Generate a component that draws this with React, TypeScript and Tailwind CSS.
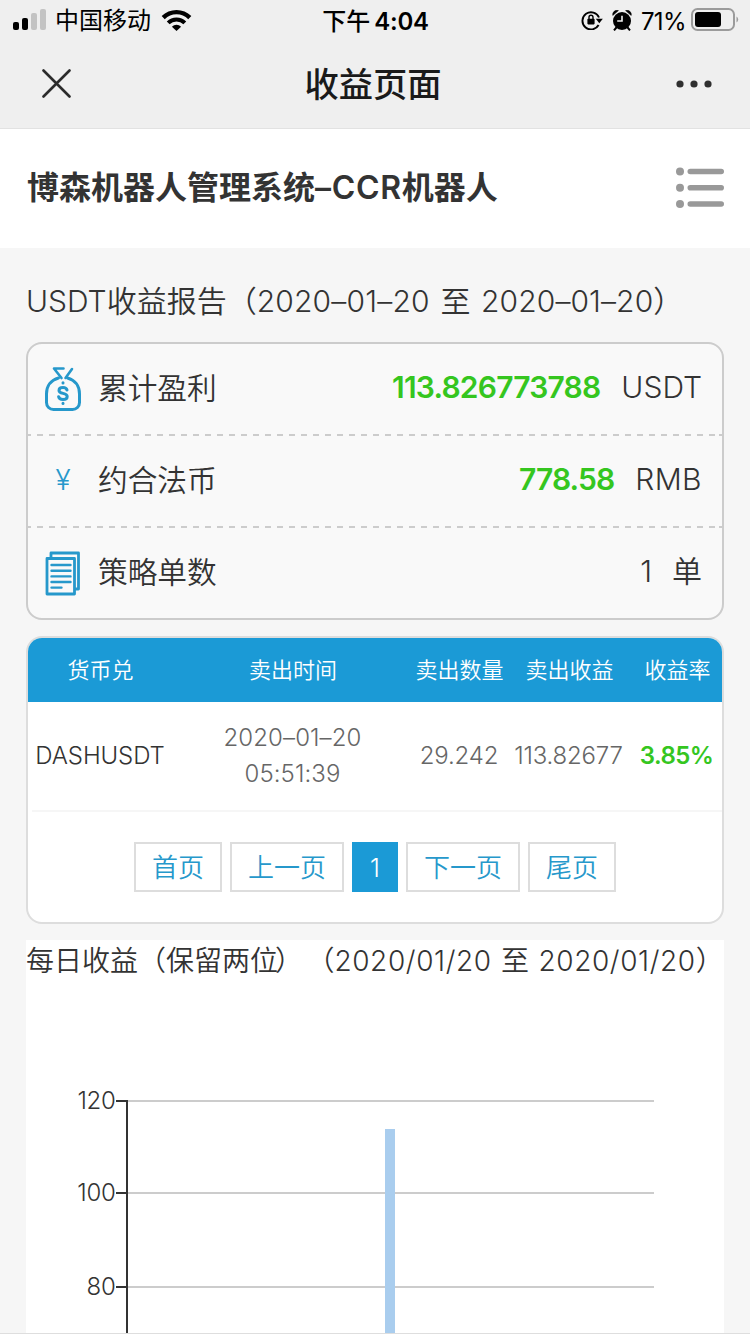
import React from 'react';
import clsx from 'clsx';

const GRID = [
  { value: 120, y: 121 },
  { value: 100, y: 213 },
  { value: 80, y: 307 },
];

const COLUMNS = [
  { label: '货币兑', className: 'w-[145px]' },
  { label: '卖出时间', className: 'w-[240px]' },
  { label: '卖出数量', className: 'w-[93px]' },
  { label: '卖出收益', className: 'w-[127px]' },
  { label: '收益率', className: 'w-[89px]' },
];

const PAGES = [
  { label: '首页', className: 'w-[88px]' },
  { label: '上一页', className: 'w-[114px]' },
  { label: '1', className: 'w-[46px]', active: true },
  { label: '下一页', className: 'w-[114px]' },
  { label: '尾页', className: 'w-[88px]' },
];

function StatusBar() {
  return (
    <div className="flex h-10 items-center text-black">
      <div className="flex flex-1 items-center pl-[13px]">
        <svg width="34" height="22" viewBox="0 0 34 22">
          <rect x="0" y="13" width="6" height="8" rx="2" />
          <rect x="9" y="9" width="6" height="12" rx="2" />
          <rect x="18" y="4" width="6" height="17" rx="2" fill="#c3c3c3" />
          <rect x="27" y="0" width="6" height="21" rx="2" fill="#c3c3c3" />
        </svg>
        <span className="ml-2 pt-[2px] text-[24px] leading-none">中国移动</span>
        <svg className="ml-[10px]" width="31" height="22" viewBox="0 0 31 22">
          <path d="M2.200 8.600a19 19 0 0 1 26.600 0" fill="none" stroke="#000" strokeWidth="4.400" />
          <path d="M7.200 13.800a11.800 11.800 0 0 1 16.600 0" fill="none" stroke="#000" strokeWidth="4" />
          <path d="M15.500 22l-4.600-4.300a6.600 6.600 0 0 1 9.200 0z" />
        </svg>
      </div>
      <div className="flex items-baseline pt-[3px] pr-px text-[24px] leading-none font-medium">
        下午<span className="ml-[4px] text-[24px] font-semibold tracking-[-0.200px]">4:04</span>
      </div>
      <div className="flex flex-1 items-center justify-end pr-[11px]">
        <svg width="22" height="20" viewBox="0 0 22 20">
          <path d="M17.600 15A8.600 8.600 0 1 1 18 7.500" fill="none" stroke="#000" strokeWidth="1.900" />
          <path d="M14.800 8.800h7L18.300 13.200z" />
          <rect x="6.400" y="8.800" width="7.200" height="5.600" rx="0.8" />
          <path d="M8 9V7.200a2 2 0 0 1 4 0V9" fill="none" stroke="#000" strokeWidth="1.400" />
        </svg>
        <svg className="ml-[9px]" width="20" height="21" viewBox="0 0 20 21">
          <circle cx="10" cy="11" r="9" />
          <path d="M0.800 5.400A4.200 4.200 0 0 1 6.400 0.600zM19.200 5.400A4.200 4.200 0 0 0 13.600 0.600z" stroke="#000" strokeWidth="0.600" />
          <path d="M4.400 17.500L2 20.400M15.600 17.500l2.400 2.900" stroke="#000" strokeWidth="2" />
          <path d="M10 5.800V11H5.200" fill="none" stroke="#efefef" strokeWidth="1.600" />
        </svg>
        <span className="ml-[9px] pt-[3px] text-[24px] leading-none tracking-[-0.600px]">71%</span>
        <svg className="ml-[5px]" width="48" height="24" viewBox="0 0 48 24">
          <rect x="1" y="1" width="42" height="21" rx="5.500" fill="none" stroke="#9b9b9b" strokeWidth="2" />
          <rect x="4" y="4" width="26" height="15" rx="3" />
          <path d="M45.500 8.500a3.500 3.500 0 0 1 0 6z" fill="#9b9b9b" />
        </svg>
      </div>
    </div>
  );
}

function NavBar() {
  return (
    <div className="flex h-[88px] items-center justify-between pr-[38px] pl-[42px]">
      <svg width="30" height="30" viewBox="0 0 30 30" stroke="#2b2b2b" strokeWidth="2.600" strokeLinecap="round">
        <path d="M1.500 1.500l26 26M27.500 1.500L1.500 27.500" />
      </svg>
      <h1 className="pt-[3px] pr-[2px] text-[34.300px] leading-none font-medium text-[#1a1a1a]">收益页面</h1>
      <svg width="36" height="8" viewBox="0 0 36 8" fill="#2f2f2f">
        <circle cx="4" cy="4" r="3.600" />
        <circle cx="18" cy="4" r="3.600" />
        <circle cx="32" cy="4" r="3.600" />
      </svg>
    </div>
  );
}

function MoneyBagIcon() {
  return (
    <svg width="38" height="46" viewBox="0 0 38 46" fill="none" stroke="#2698cb" strokeWidth="3" strokeLinejoin="round" strokeLinecap="round">
      <path d="M14.500 12C7 14 2.500 20 2.500 28v8.500a7 7 0 0 0 7 7h19a7 7 0 0 0 7-7V28c0-8-4.500-14-12-16" />
      <path d="M19.500 2.500H10l7.500 9.500M28 3l-6.500 9" strokeWidth="2.600" />
      <path d="M19 16.800v.2M19 37.200v.2" />
      <path d="M23 24c-.5-1.700-1.900-2.500-4-2.500-2.400 0-4 1.100-4 2.900 0 4 8.200 1.900 8.200 6 0 1.900-1.700 3-4.200 3-2.400 0-4-.9-4.400-2.700" />
    </svg>
  );
}

function DocumentIcon() {
  return (
    <svg width="36" height="45" viewBox="0 0 36 45" fill="none" stroke="#2698cb" strokeWidth="2.800">
      <path d="M6 7V2h27.500v36H29.500" strokeLinejoin="round" />
      <path d="M2 7.500h27.500v35.500H2z" strokeLinejoin="round" />
      <path d="M6.500 14h19M6.500 19.700h19M6.500 25.400h19M6.500 31h19M6.500 36.600h10" strokeWidth="2.400" strokeLinecap="round" />
    </svg>
  );
}

interface SummaryRowProps {
  icon: React.ReactNode;
  label: string;
  dashed?: boolean;
  children: React.ReactNode;
}

function SummaryRow({ icon, label, dashed, children }: SummaryRowProps) {
  return (
    <div className="h-[92px]">
      <div className="flex h-[90px] items-center pr-5 text-[30px] leading-none">
        <span className="flex w-[70px] justify-center">{icon}</span>
        <span className="text-[29.700px]">{label}</span>
        <span className="ml-auto flex items-baseline pb-[4px]">{children}</span>
      </div>
      {dashed && (
        <div className="h-[2px] bg-[repeating-linear-gradient(90deg,#cccccc_0_6px,transparent_6px_12px)] bg-[position:-3px_0]" />
      )}
    </div>
  );
}

function ProfitChart() {
  return (
    <svg className="block" width="698" height="353" viewBox="0 0 698 353">
      {GRID.map((line) => (
        <g key={line.value}>
          <path d={`M101 ${line.y}h527`} stroke="#cccccc" strokeWidth="2" />
          <path d={`M90 ${line.y}h11`} stroke="#333" strokeWidth="2" />
          <text x="89.500" y={line.y + 7.600} textAnchor="end" fontSize="24" fill="#333" letterSpacing="-0.300">
            {line.value}
          </text>
        </g>
      ))}
      <path d="M101 120v233" stroke="#333" strokeWidth="2" />
      <rect x="359" y="149" width="10" height="204" fill="#a9cdee" />
    </svg>
  );
}

export default function App() {
  return (
    <div className="h-[1334px] w-[750px] overflow-hidden border-b border-[#dedede] bg-[#f6f6f6] font-['Inter','Noto_Sans_CJK_SC',sans-serif] font-[350] text-[#333]">
      <div className="h-[129px] border-b border-[#e2e2e2] bg-[#efefef] font-normal">
        <StatusBar />
        <NavBar />
      </div>

      {/* Page header */}
      <header className="flex h-[119px] items-center justify-between bg-white pr-[26px] pb-[2px] pl-[27px]">
        <h2 className="text-[32px] leading-none font-bold">
          博森机器人管理系统<span className="font-semibold tracking-[0.700px]">–CCR</span>机器人
        </h2>
        <svg width="48" height="42" viewBox="0 0 48 42" fill="#999">
          {[4.5, 20.7, 37].map((y) => (
            <g key={y}>
              <circle cx="4" cy={y} r="4" />
              <rect x="11.500" y={y - 2.8} width="36.500" height="5.600" rx="2.800" />
            </g>
          ))}
        </svg>
      </header>

      <main className="px-[26px]">
        <h3 className="flex h-[94px] items-center pt-[12px] text-[30px] leading-none whitespace-pre">
          <span className="[word-spacing:2.200px]">
            USDT收益报告（<span className="tracking-[0.200px]">2020–01–20</span> 至 <span className="tracking-[0.100px]">2020–01–20</span>）
          </span>
        </h3>

        {/* Summary */}
        <section className="h-[278px] rounded-[16px] border-2 border-[#ccc] bg-[#f9f9f9]">
          <SummaryRow icon={<MoneyBagIcon />} label="累计盈利" dashed>
            <span className="mr-[21px] font-semibold tracking-[-0.800px] text-[#35c61f]">113.826773788</span>USDT
          </SummaryRow>
          <SummaryRow icon={<span className="pb-[3px] text-[28px] text-[#2698cb]">¥</span>} label="约合法币" dashed>
            <span className="mr-[21px] font-semibold tracking-[-0.900px] text-[#35c61f]">778.58</span>
            <span className="tracking-[0.400px]">RMB</span>
          </SummaryRow>
          <SummaryRow icon={<DocumentIcon />} label="策略单数">
            <span className="mr-5">1</span>单
          </SummaryRow>
        </section>

        {/* Orders */}
        <section className="mt-4 h-[288px] overflow-hidden rounded-[16px] border-2 border-[#ddd] bg-white">
          <div className="flex h-[64px] items-center bg-[#1b9ad6] text-[22px] leading-none text-white">
            {COLUMNS.map((col) => (
              <span key={col.label} className={clsx('text-center', col.className)}>{col.label}</span>
            ))}
          </div>
          <div className="ml-1 flex h-[110px] items-center border-b-2 border-[#f6f6f6] text-center text-[24px] leading-9 text-[#666]">
            <span className="w-[136px] tracking-[-0.100px] text-[#333]">DASHUSDT</span>
            <span className="w-[249px] tracking-[0.100px]">2020–01–20<br />05:51:39</span>
            <span className="w-[84px] tracking-[-0.200px]">29.242</span>
            <span className="w-[135px] tracking-[-0.200px]">113.82677</span>
            <span className="w-[81px] font-semibold tracking-[-0.600px] text-[#35c61f]">3.85%</span>
          </div>
          <div className="flex justify-center gap-2 pt-[30px] text-[26px] leading-none">
            {PAGES.map((page) => (
              <button
                key={page.label}
                className={clsx(
                  'h-[50px] border-2 pt-[2px]',
                  page.className,
                  page.active ? 'border-[#1b9ad6] bg-[#1b9ad6] text-[25px] text-white' : 'border-[#ddd] text-[#2698cb]'
                )}
              >
                {page.label}
              </button>
            ))}
          </div>
        </section>

        {/* Daily profit */}
        <section className="mt-4 bg-white">
          <h3 className="flex h-10 items-center pt-[2px] text-[28px] leading-none whitespace-pre">
            <span className="[word-spacing:1.500px]">
              每日收益（保留两<span className="tracking-[-3px]">位） </span>（<span className="tracking-[0.600px]">2020/01/20</span> 至 <span className="tracking-[0.600px]">2020/01/20</span>）
            </span>
          </h3>
          <ProfitChart />
        </section>
      </main>
    </div>
  );
}
